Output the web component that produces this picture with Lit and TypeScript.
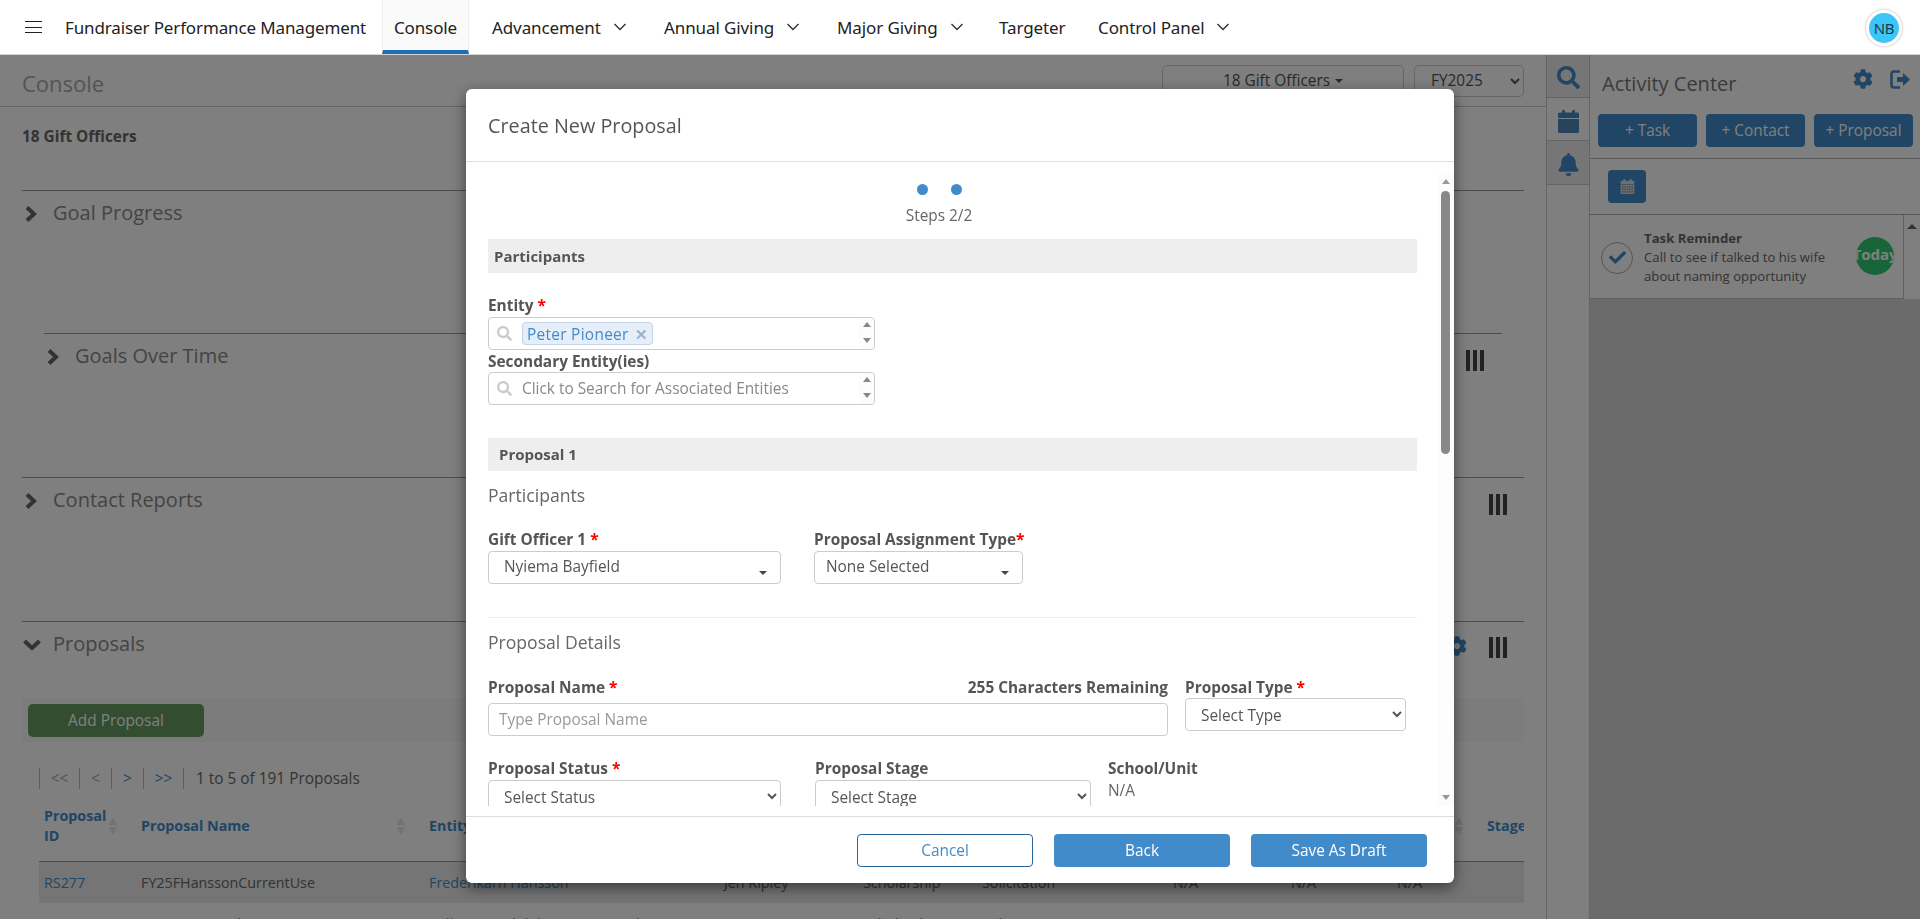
import { LitElement, html, css, svg } from 'lit';
import { customElement } from 'lit/decorators.js';

const GEAR = 'M487.4 315.7l-42.6-24.6c4.3-23.2 4.3-47 0-70.2l42.6-24.6c4.9-2.8 7.1-8.6 5.5-14-11.1-35.6-30-67.8-54.7-94.6-3.8-4.1-10-5.1-14.8-2.3L380.8 110c-17.9-15.4-38.5-27.3-60.8-35.1V25.8c0-5.6-3.9-10.5-9.4-11.7-36.7-8.2-74.3-7.8-109.2 0-5.5 1.2-9.4 6.1-9.4 11.7V75c-22.2 7.9-42.8 19.8-60.8 35.1L88.7 85.5c-4.9-2.8-11-1.9-14.8 2.3-24.7 26.7-43.6 58.9-54.7 94.6-1.7 5.4.6 11.2 5.5 14L67.3 221c-4.3 23.2-4.3 47 0 70.2l-42.6 24.6c-4.9 2.8-7.1 8.6-5.5 14 11.1 35.6 30 67.8 54.7 94.6 3.8 4.1 10 5.1 14.8 2.3l42.6-24.6c17.9 15.4 38.5 27.3 60.8 35.1v49.2c0 5.6 3.9 10.5 9.4 11.7 36.7 8.2 74.3 7.8 109.2 0 5.5-1.2 9.4-6.1 9.4-11.7v-49.2c22.2-7.9 42.8-19.8 60.8-35.1l42.6 24.6c4.9 2.8 11 1.9 14.8-2.3 24.7-26.7 43.6-58.9 54.7-94.6 1.5-5.5-.7-11.3-5.6-14.1zM256 336c-44.1 0-80-35.9-80-80s35.9-80 80-80 80 35.9 80 80-35.9 80-80 80z';
const SEARCH = 'M505 442.7L405.3 343c-4.5-4.5-10.6-7-17-7H372c27.6-35.3 44-79.7 44-128C416 93.1 322.9 0 208 0S0 93.1 0 208s93.1 208 208 208c48.3 0 92.7-16.4 128-44v16.3c0 6.4 2.5 12.5 7 17l99.7 99.7c9.4 9.4 24.6 9.4 33.9 0l28.3-28.3c9.4-9.4 9.4-24.6.1-34zM208 336c-70.7 0-128-57.2-128-128 0-70.7 57.2-128 128-128 70.7 0 128 57.2 128 128 0 70.7-57.2 128-128 128z';
const BELL = 'M224 512c35.32 0 63.97-28.65 63.97-64H160.03c0 35.35 28.65 64 63.97 64zm215.39-149.71c-19.32-20.76-55.47-51.99-55.47-154.29 0-77.7-54.48-139.9-127.94-155.16V32c0-17.67-14.32-32-31.98-32s-31.98 14.33-31.98 32v20.84C118.56 68.1 64.08 130.3 64.08 208c0 102.3-36.15 133.53-55.47 154.29-6 6.45-8.66 14.16-8.61 21.71.11 16.4 12.98 32 32.1 32h383.8c19.12 0 32-15.6 32.1-32 .05-7.55-2.61-15.27-8.61-21.71z';
const CHECK = 'M173.898 439.404l-166.4-166.4c-9.997-9.997-9.997-26.206 0-36.204l36.203-36.204c9.997-9.998 26.207-9.998 36.204 0L192 312.69 432.095 72.596c9.997-9.997 26.207-9.997 36.204 0l36.203 36.204c9.997 9.997 9.997 26.206 0 36.204l-294.4 294.401c-9.998 9.997-26.207 9.997-36.204-.001z';

// column widths of the proposals table, header and rows share them
const COLS = '97px 288px 295px 139px 119px 191px 118px 106px 90px 37px';

const ROWS = [
  ['RS277', 'FY25FHanssonCurrentUse', 'Frederikarn Hansson', 'Jen Ripley', 'Scholarship', 'Solicitation', 'N/A', 'N/A', 'N/A', ''],
  ['RS276', 'FY25 Hearst Educ 2021S', 'William Randolph Hearst Foundation', 'Lance Carr', 'Scholarship', 'Solicitation', 'N/A', 'N/A', 'N/A', ''],
];

const calendarIcon = (size: number, w: number) => svg`
  <svg width=${w} height=${size} viewBox="0 0 21 23" fill="currentColor">
    <rect x="4" y="0" width="3" height="4" rx="1"/><rect x="14" y="0" width="3" height="4" rx="1"/>
    <path d="M1.5 2.5h18a1.5 1.5 0 0 1 1.5 1.5v4H0V4a1.5 1.5 0 0 1 1.5-1.5z"/>
    <path d="M0 9h21v12.5a1.5 1.5 0 0 1-1.5 1.5h-18A1.5 1.5 0 0 1 0 21.5z"/>
    ${[0, 1, 2].map((r) => [0, 1, 2, 3, 4].map((c) => svg`<rect x=${2.2 + c * 3.6} y=${11 + r * 3.8} width="2.4" height="2.4" fill="#7f7f7f" fill-opacity=".75"/>`))}
  </svg>`;

const bars = html`<svg class="bars" width="18" height="21" viewBox="0 0 18 21" fill="currentColor">
  <rect x="0" width="4" height="21"/><rect x="7" width="4" height="21"/><rect x="14" width="4" height="21"/>
</svg>`;

const chevRight = html`<svg class="chev" width="12" height="16" viewBox="0 0 12 16" fill="none" stroke="currentColor" stroke-width="4"><polyline points="2,1.5 9,8 2,14.5"/></svg>`;
const chevDown = html`<svg class="chev" width="18" height="12" viewBox="0 0 18 12" fill="none" stroke="currentColor" stroke-width="4"><polyline points="1.5,2 9,9 16.5,2"/></svg>`;
const navChev = html`<svg class="nav-chev" width="14" height="8" viewBox="0 0 14 8" fill="none" stroke="currentColor" stroke-width="1.4"><polyline points="1.5,1 7,6.5 12.5,1"/></svg>`;
const sort = html`<svg class="sort" width="10" height="18" viewBox="0 0 10 18" fill="currentColor"><path d="M5 0l4.5 8h-9zM5 18l-4.5-8h9z"/></svg>`;
const searchIcon = html`<svg class="mag" width="15" height="15" viewBox="0 0 512 512" fill="currentColor"><path d=${SEARCH}/></svg>`;
const spin = html`<div class="spin"><i class="up"></i><i class="dn"></i></div>`;

@customElement('app-root')
export class AppRoot extends LitElement {
  static styles = css`
    :host {
      display: block;
      width: 1920px;
      height: 919px;
      overflow: hidden;
      position: relative;
      background: #fff;
      font-family: "Open Sans", "Noto Sans", sans-serif;
      font-size: 15.4px;
      color: #666;
    }
    * { box-sizing: border-box; }

    /* top bar */
    .nav {
      height: 55px;
      display: flex;
      align-items: stretch;
      border-bottom: 1px solid #d4d4d4;
      background: #fff;
      font-family: "Noto Sans", "Open Sans", sans-serif;
      font-size: 17px;
      color: #222;
      position: relative;
      z-index: 5;
    }
    .burger { width: 65px; padding-left: 25px; display: flex; flex-direction: column; justify-content: center; gap: 4.5px; }
    .burger i { display: block; width: 17px; height: 1px; background: #222; }
    .brand { width: 317px; display: flex; align-items: center; letter-spacing: -0.13px; white-space: nowrap; }
    .tab { display: flex; align-items: center; white-space: nowrap; letter-spacing: -0.1px; }
    .tab.on {
      width: 87px; justify-content: center;
      background: #fafafa;
      border-left: 1px solid #eee; border-right: 1px solid #eee;
      border-bottom: 4px solid #1a6fb5;
      margin-right: 23px;
      padding-top: 4px;
    }
    .nav-chev { margin-left: 12px; color: #333; }
    .avatar {
      margin: 10px 18px 0 auto;
      width: 36px; height: 36px;
      border-radius: 50%;
      background: #3cc6f7;
      border: 3px solid #fff;
      box-shadow: 0 0 3px rgba(0,0,0,.3);
      font-size: 15px;
      letter-spacing: -0.3px;
      color: #1d3a4a;
      display: flex; align-items: center; justify-content: center;
    }

    /* page under the dialog */
    .page { display: flex; height: 864px; }
    .main { width: 1546px; flex: none; overflow: hidden; }
    .head {
      height: 52px;
      padding: 0 22px;
      display: flex; align-items: center;
      border-bottom: 1px solid #c8c8c8;
    }
    .head h1 { margin: 0; padding-top: 4px; font-size: 22px; font-weight: 400; color: #a8a8a8; flex: 1; }
    .pick {
      width: 242px; height: 32px;
      margin-right: 10px;
      border: 1px solid #ccc; border-radius: 5px;
      display: flex; align-items: center; justify-content: center; gap: 5px;
      color: #555;
    }
    .pick i { border: 4px solid transparent; border-top-color: #555; border-bottom: 0; }
    .fy { width: 110px; height: 32px; border: 1px solid #ccc; border-radius: 5px; background: #fff; font: inherit; color: #555; padding-left: 12px; }
    .officers { height: 83px; padding: 20px 22px 0; font-weight: 700; color: #666; line-height: 20px; }
    .sec { margin: 0 22px; border-top: 1px solid #999; height: 144px; display: flex; color: #888; }
    .sec.in { margin: 0 44px; }
    .sec.in .bars { margin-right: 18px; }
    .sec.first { height: 143px; }
    .sec-head { display: flex; align-items: flex-start; width: 100%; padding-top: 8px; }
    .chev { flex: none; color: #666; margin: 7px 16px 0 3px; }
    .sec-head span { font-size: 20px; line-height: 28px; flex: 1; }
    .bars { color: #444; margin: 8px 17px 0 0; }
    .props { margin: 0 22px; border-top: 1px solid #999; color: #888; }
    .props .sec-head { padding-top: 8px; height: 76px; }
    .props .chev { margin: 9px 12px 0 1px; }
    .props .bars { margin-top: 7px; }
    .cog { color: #428bca; margin: 6px 22px 0 0; }
    .tools { height: 44px; background: #f8f8f8; padding: 6px; }
    .add {
      width: 176px; height: 33px;
      border-radius: 5px;
      background: #669a62;
      color: #fff;
      display: flex; align-items: center; justify-content: center;
      padding-bottom: 1px;
    }
    .pager { margin: 26px 0 0 39px; height: 21px; display: flex; align-items: center; color: #666; }
    .pager b { width: 1px; height: 21px; background: #bbb; }
    .pager span { font-weight: 400; text-align: center; }
    .pager .p1 { width: 39px; color: #aaa; } .pager .p2 { width: 31px; color: #aaa; }
    .pager .p3 { width: 31px; color: #428bca; } .pager .p4 { width: 39px; color: #428bca; }
    .pager .count { margin-left: 12px; }
    .grid { margin-left: 39px; display: grid; width: 1485px; overflow: hidden; font-size: 14.3px; }
    .th { height: 64px; margin-top: 9px; padding-bottom: 8px; border-bottom: 1px solid #999; align-items: center; font-weight: 700; color: #428bca; }
    .th > div { padding-left: 5px; display: flex; align-items: center; line-height: 20px; }
    .th .sort { color: #e0e8ef; margin-left: auto; margin-right: 18px; flex: none; }
    .tr { height: 41px; align-items: center; color: #666; white-space: nowrap; padding-bottom: 1px; }
    .tr.dim { background: #ebebeb; }
    .tr > div { padding-left: 5px; overflow: hidden; }
    .tr a { color: #428bca; }

    /* rail and activity center */
    .rail { width: 44px; flex: none; border-left: 1px solid #c8c8c8; border-right: 1px solid #c8c8c8; color: #428bca; }
    .rail div { display: flex; align-items: center; justify-content: center; border-bottom: 1px solid #c8c8c8; padding-top: 3px; }
    .rail .r1 { height: 43px; background: #ececec; }
    .rail .r2 { height: 43px; padding-top: 5px; }
    .rail .r3 { height: 44px; background: #ececec; }
    .act { flex: 1; display: flex; flex-direction: column; }
    .act-head { height: 59px; display: flex; padding: 0 9px 0 12px; align-items: center; }
    .act-head h2 { margin: 0; padding-bottom: 2px; font-size: 20px; font-weight: 400; color: #777; flex: 1; }
    .act-head svg { color: #428bca; margin-top: -11px; }
    .act-btns { display: flex; gap: 9px; padding: 0 6px 0 8px; height: 45px; border-bottom: 1px solid #b8b8b8; }
    .act-btns div {
      width: 99px; height: 33px;
      background: #428bca; border-radius: 4px; color: #fff;
      display: flex; align-items: center; justify-content: center;
    }
    .act-cal { height: 56px; padding: 11px 18px; border-bottom: 1px solid #aaa; }
    .act-cal div { width: 38px; height: 33px; background: #428bca; border-radius: 4px; color: #ddd; display: flex; align-items: center; justify-content: center; }
    .act-list { flex: 1; background: #d6d6d6; display: flex; flex-direction: column; }
    .rem-row { display: flex; background: #fff; height: 84px; }
    .rem {
      width: 314px; flex: none;
      border: 1px solid #c0c0c0;
      border-width: 0 1px 1px 0;
      display: flex; align-items: center;
      padding: 2px 0 0 11px;
      font-size: 13.2px;
      line-height: 19px;
      color: #666;
    }
    .tick { width: 32px; height: 32px; border-radius: 50%; border: 1px solid #aaa; color: #428bca; display: flex; align-items: center; justify-content: center; margin: 0 11px 0 0; flex: none; }
    .rem-text { width: 204px; flex: none; }
    .rem-text b { display: block; }
    .today {
      width: 38px; height: 38px; border-radius: 50%;
      background: #2fcc74; color: #fff; font-weight: 700; font-size: 15px;
      display: flex; align-items: center; justify-content: center;
      overflow: hidden; margin: -4px 0 0 8px; padding-bottom: 3px; flex: none;
    }
    .rem-track { flex: 1; display: flex; justify-content: center; padding-top: 9px; }
    .rem-track i { border: 5px solid transparent; border-bottom: 5px solid #666; border-top: 0; height: 0; }

    /* dialog */
    .veil {
      position: fixed;
      inset: 55px 0 0 0;
      background: rgba(0, 0, 0, .5);
      display: flex;
      justify-content: center;
      align-items: flex-start;
      padding-top: 34px;
      z-index: 4;
    }
    .modal {
      width: 988px;
      background: #fff;
      border-radius: 6px;
      box-shadow: 0 5px 15px rgba(0, 0, 0, .5);
      color: #555;
    }
    .m-head { height: 73px; padding: 0 22px; border-bottom: 1px solid #ddd; display: flex; align-items: center; font-size: 19.8px; color: #555; }
    .m-body { height: 655px; border-bottom: 1px solid #ddd; padding-bottom: 11px; display: flex; }
    .m-scroll { width: 971px; flex: none; height: 644px; overflow: hidden; padding: 0 20px 0 22px; }
    .track { flex: 1; margin-top: 11px; height: 633px; background: #fcfcfc; position: relative; display: flex; flex-direction: column; align-items: center; }
    .track .up { margin-top: 6px; border: 4.5px solid transparent; border-bottom: 5px solid #999; border-top: 0; }
    .track .thumb { margin-top: 7px; width: 9px; height: 263px; border-radius: 5px; background: #888; }
    .track .dn { margin-top: auto; margin-bottom: 6px; border: 4.5px solid transparent; border-top: 5px solid #999; border-bottom: 0; }
    .steps { padding: 22px 27px 0 0; height: 77px; text-align: center; color: #666; line-height: 20px; }
    .dots { display: flex; justify-content: center; gap: 23px; margin-bottom: 11px; }
    .dots i { width: 11px; height: 11px; border-radius: 50%; background: #428bca; }
    .bar { height: 34px; background: #eee; padding: 0 0 1px 6px; display: flex; align-items: center; font-weight: 700; color: #555; font-size: 15px; }
    .bar.p { height: 33px; padding: 0 0 2px 11px; margin-top: 33px; }
    label { display: block; font-weight: 700; color: #555; line-height: 22px; margin-bottom: -2px; white-space: nowrap; }
    label em { color: #f00; font-style: normal; }
    .lbl1 { margin-top: 22px; }
    .lbl2 { margin-top: 1px; }
    .srch {
      width: 387px; height: 33px;
      margin-top: 2px;
      border: 1px solid #ccc; border-radius: 4px;
      display: flex; align-items: center;
      padding-left: 8px;
      position: relative;
    }
    .srch.b { margin-top: 1px; }
    .mag { color: #ccc; flex: none; margin-right: 10px; }
    .chip {
      height: 23px; padding: 1px 4px 0;
      border: 1px solid #c5d3e6; border-radius: 4px;
      background: #e6eefa;
      color: #428bca; font-size: 15.4px;
      letter-spacing: .3px;
      display: flex; align-items: center; gap: 6px;
    }
    .chip span { color: #a0aec8; font-size: 15px; font-weight: 700; }
    .ph { color: #888; padding-bottom: 1px; }
    .spin { position: absolute; right: 0; top: 0; bottom: 0; width: 15px; background: #fcfcfc; border-radius: 0 4px 4px 0; display: flex; flex-direction: column; align-items: center; justify-content: space-between; padding: 4px 0 6px; }
    .spin .up { border: 4.5px solid transparent; border-bottom: 5px solid #888; border-top: 0; }
    .spin .dn { border: 4.5px solid transparent; border-top: 5px solid #888; border-bottom: 0; }
    h4 { margin: 12px 0 0; font-size: 17.6px; font-weight: 400; line-height: 24px; color: #666; }
    .row { display: grid; align-items: start; }
    .r-a { grid-template-columns: 293px 209px; column-gap: 33px; margin-top: 22px; }
    .r-b { grid-template-columns: 680px 221px; column-gap: 17px; margin-top: 23px; }
    .r-c { grid-template-columns: 293px 276px auto; column-gap: 34px; margin-top: 22px; }
    .r-c select.sel { margin-top: 2px; }
    .r-c > div:last-child { margin-left: -17px; }
    .dd {
      height: 33px; margin-top: 2px;
      border: 1px solid #ccc; border-radius: 4px;
      display: flex; align-items: center;
      color: #555;
      padding: 0 16px 3px 15px;
      position: relative;
    }
    .dd.n { padding-left: 11px; }
    .dd i { position: absolute; right: 13px; top: 19px; border: 4px solid transparent; border-top: 4px solid #444; border-bottom: 0; }
    .split { display: flex; justify-content: space-between; }
    .name { height: 33px; margin-top: 6px; border: 1px solid #ccc; border-radius: 4px; display: flex; align-items: center; padding: 0 0 0 10px; color: #999; }
    select.sel {
      display: block; width: 100%;
      height: 33px;
      margin-top: 1px;
      border: 1px solid #ccc; border-radius: 4px;
      background: #fff;
      font: inherit;
      color: #555;
      padding: 1px 0 0 11px;
    }
    hr { border: 0; border-top: 1px solid #eee; margin: 33px 0 0; }
    .na { margin-top: 2px; line-height: 22px; color: #666; }
    .m-foot { height: 66px; padding: 17px 27px 0; display: flex; justify-content: flex-end; gap: 21px; }
    .btn { width: 176px; height: 33px; border-radius: 4px; background: #428bca; color: #fff; display: flex; align-items: center; justify-content: center; }
    .btn.ghost { background: #fff; color: #428bca; border: 1px solid #2a6496; }
  `;

  render() {
    return html`
      <div class="nav">
        <div class="burger"><i></i><i></i><i></i></div>
        <div class="brand">Fundraiser Performance Management</div>
        <div class="tab on">Console</div>
        <div class="tab" style="width:172px">Advancement ${navChev}</div>
        <div class="tab" style="width:173px">Annual Giving ${navChev}</div>
        <div class="tab" style="width:162px">Major Giving ${navChev}</div>
        <div class="tab" style="width:99px">Targeter</div>
        <div class="tab">Control Panel ${navChev}</div>
        <div class="avatar">NB</div>
      </div>

      <div class="page">
        <div class="main">
          <div class="head">
            <h1>Console</h1>
            <div class="pick">18 Gift Officers <i></i></div>
            <select class="fy"><option>FY2025</option></select>
          </div>
          <div class="officers">18 Gift Officers</div>
          <div class="sec first"><div class="sec-head">${chevRight}<span>Goal Progress</span></div></div>
          <div class="sec in"><div class="sec-head">${chevRight}<span>Goals Over Time</span>${bars}</div></div>
          <div class="sec"><div class="sec-head">${chevRight}<span>Contact Reports</span>${bars}</div></div>
          <div class="props">
            <div class="sec-head">${chevDown}<span>Proposals</span>
              <svg class="cog" width="20" height="20" viewBox="0 0 512 512" fill="currentColor"><path d=${GEAR}/></svg>${bars}
            </div>
            <div class="tools"><div class="add">Add Proposal</div></div>
          </div>
          <div class="pager">
            <b></b><span class="p1">&lt;&lt;</span><b></b><span class="p2">&lt;</span><b></b><span class="p3">&gt;</span><b></b><span class="p4">&gt;&gt;</span><b></b>
            <span class="count">1 to 5 of 191 Proposals</span>
          </div>
          <div class="grid th" style="grid-template-columns:${COLS}">
            <div>Proposal<br />ID ${sort}</div>
            <div>Proposal Name ${sort}</div>
            <div>Entity</div>
            <div></div><div></div><div></div><div></div><div></div>
            <div>${sort}</div>
            <div>Stage</div>
          </div>
          ${ROWS.map((r, i) => html`
            <div class="grid tr ${i === 0 ? 'dim' : ''}" style="grid-template-columns:${COLS}">
              ${r.map((c, j) => html`<div>${j === 0 || j === 2 ? html`<a>${c}</a>` : c}</div>`)}
            </div>`)}
        </div>

        <div class="rail">
          <div class="r1"><svg width="23" height="23" viewBox="0 0 512 512" fill="currentColor"><path d=${SEARCH}/></svg></div>
          <div class="r2">${calendarIcon(23, 21)}</div>
          <div class="r3"><svg width="21" height="23" viewBox="0 0 448 512" fill="currentColor"><path d=${BELL}/></svg></div>
        </div>

        <div class="act">
          <div class="act-head">
            <h2>Activity Center</h2>
            <svg width="20" height="20" viewBox="0 0 512 512" fill="currentColor" style="margin-right:17px"><path d=${GEAR}/></svg>
            <svg width="21" height="19" viewBox="0 0 21 19" fill="none" stroke="currentColor" stroke-width="2.6">
              <path d="M10 1.5H4a2.5 2.5 0 0 0-2.5 2.5v11A2.5 2.5 0 0 0 4 17.5h6"/>
              <path d="M7 7h6V3l7 6.5-7 6.5v-4H7z" fill="currentColor" stroke="none"/>
            </svg>
          </div>
          <div class="act-btns"><div>+ Task</div><div>+ Contact</div><div>+ Proposal</div></div>
          <div class="act-cal"><div>${calendarIcon(15, 15)}</div></div>
          <div class="act-list">
            <div class="rem-row">
              <div class="rem">
                <div class="tick"><svg width="17" height="17" viewBox="0 0 512 512" fill="currentColor"><path d=${CHECK}/></svg></div>
                <div class="rem-text"><b>Task Reminder</b>Call to see if talked to his wife about naming opportunity</div>
                <div class="today">Today</div>
              </div>
              <div class="rem-track"><i></i></div>
            </div>
          </div>
        </div>
      </div>

      <div class="veil">
        <div class="modal">
          <div class="m-head">Create New Proposal</div>
          <div class="m-body">
            <div class="m-scroll">
              <div class="steps">
                <div class="dots"><i></i><i></i></div>
                Steps 2/2
              </div>
              <div class="bar">Participants</div>
              <label class="lbl1">Entity <em>*</em></label>
              <div class="srch">${searchIcon}<div class="chip">Peter Pioneer <span>✕</span></div>${spin}</div>
              <label class="lbl2">Secondary Entity(ies)</label>
              <div class="srch b">${searchIcon}<div class="ph">Click to Search for Associated Entities</div>${spin}</div>

              <div class="bar p">Proposal 1</div>
              <h4>Participants</h4>
              <div class="row r-a">
                <div>
                  <label>Gift Officer 1 <em>*</em></label>
                  <div class="dd">Nyiema Bayfield<i></i></div>
                </div>
                <div>
                  <label>Proposal Assignment Type<em>*</em></label>
                  <div class="dd n">None Selected<i></i></div>
                </div>
              </div>
              <hr />
              <h4>Proposal Details</h4>
              <div class="row r-b">
                <div>
                  <div class="split"><label>Proposal Name <em>*</em></label><label>255 Characters Remaining</label></div>
                  <div class="name">Type Proposal Name</div>
                </div>
                <div>
                  <label>Proposal Type <em>*</em></label>
                  <select class="sel"><option>Select Type</option></select>
                </div>
              </div>
              <div class="row r-c">
                <div>
                  <label>Proposal Status <em>*</em></label>
                  <select class="sel"><option>Select Status</option></select>
                </div>
                <div>
                  <label>Proposal Stage</label>
                  <select class="sel"><option>Select Stage</option></select>
                </div>
                <div>
                  <label>School/Unit</label>
                  <div class="na">N/A</div>
                </div>
              </div>
            </div>
            <div class="track"><i class="up"></i><div class="thumb"></div><i class="dn"></i></div>
          </div>
          <div class="m-foot">
            <div class="btn ghost">Cancel</div>
            <div class="btn">Back</div>
            <div class="btn">Save As Draft</div>
          </div>
        </div>
      </div>
    `;
  }
}
